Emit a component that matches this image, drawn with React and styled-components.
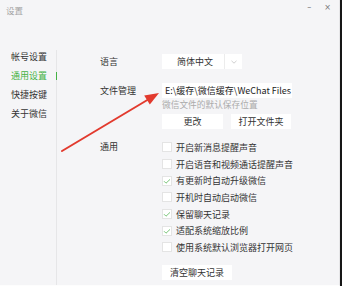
import React from "react"
import styled, { createGlobalStyle } from "styled-components"

const GlobalStyle = createGlobalStyle`
	html, body {
		margin: 0;
		padding: 0;
		background: #161616;
	}
	body {
		font-family: "Noto Sans CJK SC", "Noto Sans", sans-serif;
		color: #333;
		-webkit-font-smoothing: antialiased;
	}
`;

const Window = styled.div`
	position: relative;
	width: 339px;
	height: 285px;
	background: #f5f5f7;
	border-right: 1px solid #e6e6e8;
	border-bottom: 1px solid #fdfdfd;
	display: flex;
	flex-direction: column;
	overflow: hidden;
`;

const TitleBar = styled.div`
	height: 47px;
	flex: none;
	display: flex;
	align-items: flex-start;
	justify-content: space-between;
	padding: 3px 8px 0 6px;
	box-sizing: border-box;
`;

const Title = styled.span`
	font-size: 8.5px;
	line-height: 14px;
	color: #a3a3a3;
`;

const WinControls = styled.div`
	display: flex;
	gap: 13px;
	font-size: 8px;
	line-height: 10px;
	color: #777;
	font-family: "DejaVu Sans", sans-serif;
`;

const Body = styled.div`
	flex: 1;
	display: flex;
`;

const Sidebar = styled.div`
	width: 57px;
	flex: none;
	border-right: 1px solid #e6e6e8;
	margin-top: 3px;
	padding-top: 0;
	box-sizing: border-box;
`;

const NavItem = styled.div`
	position: relative;
	height: 19px;
	line-height: 19px;
	padding-left: 11px;
	font-size: 9px;
	color: ${ p => p.active ? "#45b245" : "#333" };
	&:first-child { margin-top: -3px; }

	&::after {
		content: "";
		display: ${ p => p.active ? "block" : "none" };
		position: absolute;
		right: -1px;
		top: 6px;
		width: 1px;
		height: 8px;
		background: #45b245;
	}
`;

const Main = styled.div`
	flex: 1;
	padding: 7px 0 0 43px;
	display: flex;
	flex-direction: column;
`;

const Section = styled.div`
	display: grid;
	grid-template-columns: 62px 1fr;
	margin-top: ${ p => p.gap || 0 }px;
`;

const Label = styled.div`
	font-size: 9px;
	line-height: ${ p => p.lh || 15 }px;
	color: #333;
`;

const Column = styled.div`
	display: flex;
	flex-direction: column;
	align-items: flex-start;
`;

const Select = styled.div`
	width: 80px;
	height: 15px;
	background: #fff;
	display: flex;
	font-size: 9px;
	line-height: 15px;
`;

const SelectText = styled.div`
	width: 63px;
	text-align: center;
	border-right: 1px solid #ececec;
	padding-left: 4px;
	box-sizing: border-box;
`;

const SelectArrow = styled.div`
	flex: 1;
	display: flex;
	align-items: center;
	justify-content: center;
`;

const PathBox = styled.div`
	width: 130px;
	height: 15px;
	background: #fff;
	font-size: 9px;
	line-height: 15px;
	padding-left: 3px;
	box-sizing: border-box;
	white-space: nowrap;
	color: #222;
`;

const Hint = styled.div`
	font-size: 8.7px;
	line-height: 12px;
	color: #ababab;
	margin-top: 1px;
`;

const ButtonRow = styled.div`
	display: flex;
	gap: 8px;
	margin-top: 3px;
`;

const Button = styled.div`
	width: ${ p => p.w }px;
	height: 15px;
	background: #fff;
	font-size: 9px;
	line-height: 15px;
	text-align: center;
	color: #333;
`;

const CheckRow = styled.div`
	height: 16.7px;
	display: flex;
	align-items: center;
	gap: 4px;
	font-size: 9px;
	color: #333;
`;

const Box = styled.div`
	width: 10px;
	height: 10px;
	background: #fff;
	border: 1px solid #e4e4e4;
	box-sizing: border-box;
	flex: none;
	display: flex;
	align-items: center;
	justify-content: center;
`;

const Overlay = styled.svg`
	position: absolute;
	left: 0;
	top: 0;
	pointer-events: none;
`;

const Check = () => (
	<svg width="8" height="8" viewBox="0 0 8 8">
		<path d="M1 4.2 L3 6.2 L7 2.4" fill="none" stroke="#6cbf6c" strokeWidth="0.9" />
	</svg>
)

const options = [
	{ text: "开启新消息提醒声音", on: false },
	{ text: "开启语音和视频通话提醒声音", on: false },
	{ text: "有更新时自动升级微信", on: true },
	{ text: "开机时自动启动微信", on: false },
	{ text: "保留聊天记录", on: true },
	{ text: "适配系统缩放比例", on: true },
	{ text: "使用系统默认浏览器打开网页", on: false },
]

export default function App() {
	return (
		<>
			<GlobalStyle />
			<Window>
				<TitleBar>
					<Title>设置</Title>
					<WinControls>
						<span>–</span>
						<span>×</span>
					</WinControls>
				</TitleBar>

				<Body>
					<Sidebar>
						<NavItem>帐号设置</NavItem>
						<NavItem active>通用设置</NavItem>
						<NavItem>快捷按键</NavItem>
						<NavItem>关于微信</NavItem>
					</Sidebar>

					<Main>
						<Section>
							<Label>语言</Label>
							<Select>
								<SelectText>简体中文</SelectText>
								<SelectArrow>
									<svg width="6" height="4" viewBox="0 0 6 4">
										<path d="M0.5 0.8 L3 3.2 L5.5 0.8" fill="none" stroke="#bbb" strokeWidth="0.7" />
									</svg>
								</SelectArrow>
							</Select>
						</Section>

						<Section gap={ 14 }>
							<Label>文件管理</Label>
							<Column>
								<PathBox>E:\缓存\微信缓存\WeChat Files</PathBox>
								<Hint>微信文件的默认保存位置</Hint>
								<ButtonRow>
									<Button w={ 61 }>更改</Button>
									<Button w={ 60 }>打开文件夹</Button>
								</ButtonRow>
							</Column>
						</Section>

						<Section gap={ 10 }>
							<Label lh={ 16.7 }>通用</Label>
							<Column>
								{ options.map(o => (
									<CheckRow key={ o.text }>
										<Box>{ o.on && <Check /> }</Box>
										<span>{ o.text }</span>
									</CheckRow>
								)) }
								<Button w={ 70 } style={{ marginTop: 9 }}>清空聊天记录</Button>
							</Column>
						</Section>
					</Main>
				</Body>

				<Overlay width="339" height="285" viewBox="0 0 339 285">
					<line x1="62" y1="151" x2="149" y2="99" stroke="#e23a2e" strokeWidth="2" strokeLinecap="round" />
					<polygon points="159,93 149.8,104.6 144.2,95.4" fill="#e23a2e" />
				</Overlay>
			</Window>
		</>
	)
}
